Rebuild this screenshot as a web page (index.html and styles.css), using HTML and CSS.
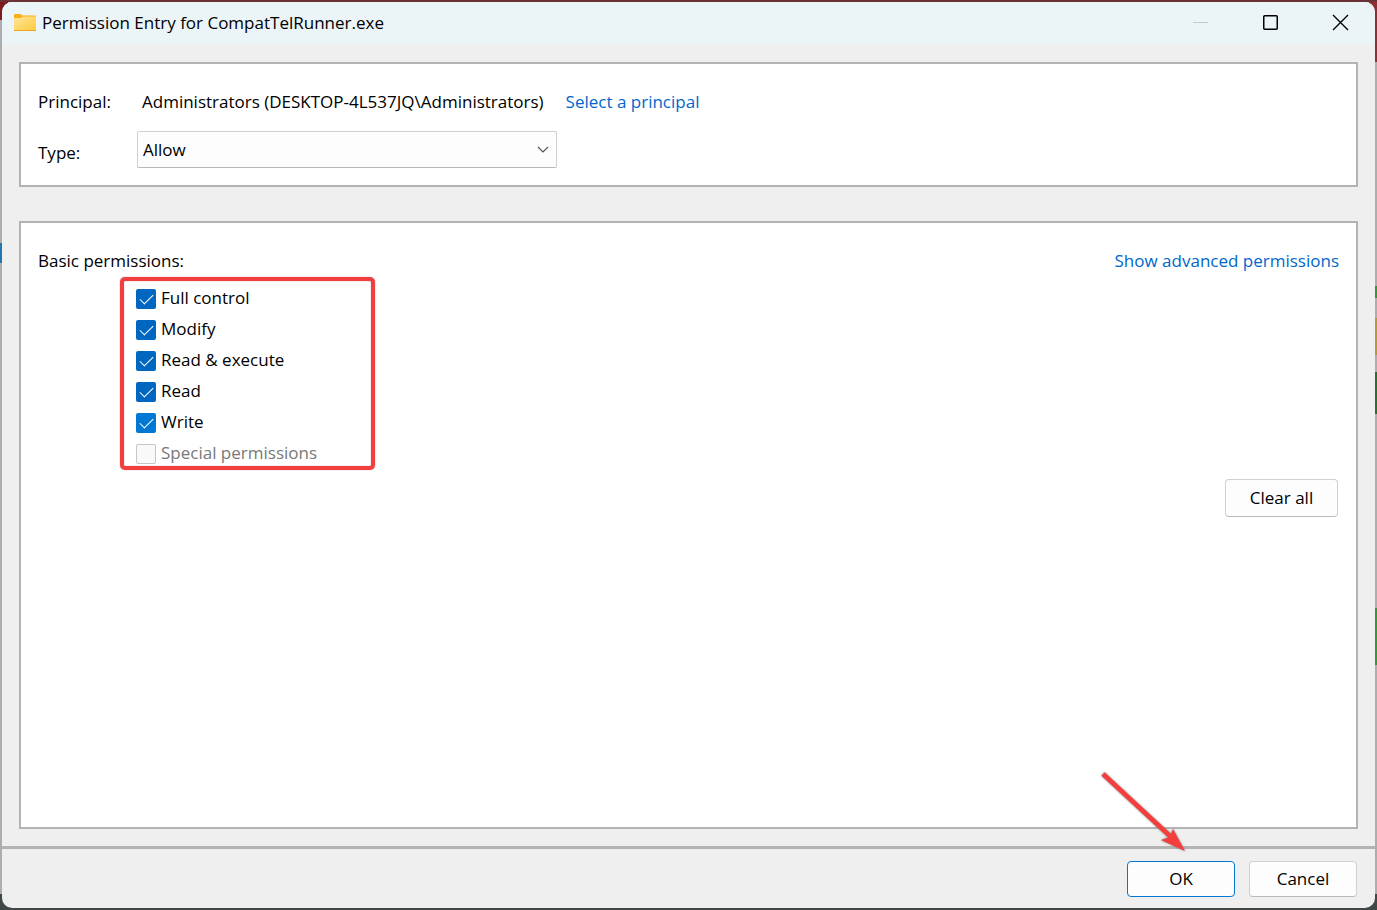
FILE: index.html
```
<!DOCTYPE html>
<html lang="en">
<head>
  <meta charset="UTF-8" />
  <meta name="viewport" content="width=device-width, initial-scale=1.0" />
  <title>Permission Entry for CompatTelRunner.exe</title>
  <link rel="stylesheet" href="styles.css">
</head>
<body>

  <div class="window">
    <header class="titlebar">
      <svg class="folder" width="22" height="18" viewBox="0 0 22 18" aria-hidden="true">
        <defs>
          <linearGradient id="folderFront" x1="0" y1="0" x2="1" y2="1">
            <stop offset="0" stop-color="#ffe69a" />
            <stop offset="1" stop-color="#ffc93c" />
          </linearGradient>
        </defs>
        <path d="M0 1Q0 0 1 0H6.5L8.5 1.5H21Q22 1.5 22 2.5V15H0Z" fill="#f8b016" />
        <path d="M0 4H6.5L9 2.5H22V16Q22 17 21 17H1Q0 17 0 16Z" fill="url(#folderFront)" />
        <path d="M0 16.5H22" stroke="#eda61c" />
      </svg>
      <h1>Permission Entry for CompatTelRunner.exe</h1>
      <div class="window-controls">
        <button type="button" aria-label="Minimize" disabled>
          <svg width="17" height="17" viewBox="0 0 17 17"><path d="M1 8.5H16" stroke="#c3c8ca" /></svg>
        </button>
        <button type="button" aria-label="Maximize">
          <svg width="17" height="17" viewBox="0 0 17 17"><rect x="1.75" y="1.75" width="13.5" height="13.5" rx="1" fill="none" stroke="#000" stroke-width="1.5" /></svg>
        </button>
        <button type="button" aria-label="Close">
          <svg width="17" height="17" viewBox="0 0 17 17"><path d="M1 1L16 16M16 1L1 16" stroke="#000" stroke-width="1.4" /></svg>
        </button>
      </div>
    </header>

    <main class="content">
      <section class="panel principal-panel">
        <div class="field">
          <span class="field-label">Principal:</span>
          <span class="principal-name">Administrators (DESKTOP-4L537JQ\Administrators)</span>
          <a href="#">Select a principal</a>
        </div>
        <div class="field">
          <label class="field-label" for="type">Type:</label>
          <div class="select-wrap">
            <select id="type">
              <option selected>Allow</option>
              <option>Deny</option>
            </select>
            <svg class="chevron" width="12" height="8" viewBox="0 0 12 8" aria-hidden="true"><path d="M1 1L6 6L11 1" fill="none" stroke="#555" stroke-width="1.2" /></svg>
          </div>
        </div>
      </section>

      <section class="panel permissions-panel">
        <div class="panel-head">
          <h2 id="basic">Basic permissions:</h2>
          <a href="#">Show advanced permissions</a>
        </div>
        <div class="permissions" role="group" aria-labelledby="basic">
          <label><input type="checkbox" checked>Full control</label>
          <label><input type="checkbox" checked>Modify</label>
          <label><input type="checkbox" checked>Read &amp; execute</label>
          <label><input type="checkbox" checked>Read</label>
          <label><input type="checkbox" class="active" checked>Write</label>
          <label class="disabled"><input type="checkbox" disabled>Special permissions</label>
          <div class="highlight"></div>
        </div>
        <button type="button" class="btn clear-btn">Clear all</button>
      </section>
    </main>

    <footer class="actions">
      <button type="button" class="btn primary">OK</button>
      <button type="button" class="btn">Cancel</button>
      <svg class="arrow" width="86" height="82" viewBox="0 0 86 82" aria-hidden="true">
        <path d="M3 3L71 66" stroke="#f43e3d" stroke-width="4.5" />
        <path d="M85 80L73 58L70 66L61 69Z" fill="#f43e3d" />
      </svg>
    </footer>
  </div>

</body>
</html>
```
FILE: styles.css
```
* {
  box-sizing: border-box;
}

body {
  margin: 0;
  padding: 2px;
  height: 100vh;
  font-family: 'Open Sans', 'Noto Sans', sans-serif;
  font-size: 17px;
  line-height: 24px;
  color: #000;
  /* slivers of the desktop around the window */
  background:
    linear-gradient(#6b3236, #6b3236) top / 100% 2px no-repeat,
    linear-gradient(#3f4747, #3f4747) bottom / 100% 16px no-repeat,
    linear-gradient(#2475b0, #2475b0) 0 243px / 2px 20px no-repeat,
    linear-gradient(#7c1a1d, #7c1a1d) left top / 8px 20px no-repeat,
    linear-gradient(#8b3033, #8b3033) right top / 8px 62px no-repeat,
    linear-gradient(#2e9a37, #2e9a37) right 286px / 2px 12px no-repeat,
    linear-gradient(#b39b30, #b39b30) right 318px / 2px 37px no-repeat,
    linear-gradient(#26722c, #26722c) right 372px / 2px 42px no-repeat,
    linear-gradient(#2e9a37, #2e9a37) right 608px / 2px 57px no-repeat,
    #adadad;
}

button, select, input {
  font: inherit;
  color: inherit;
}

a {
  color: #0066cc;
  text-decoration: none;
}

.window {
  height: 100%;
  display: flex;
  flex-direction: column;
  background: #efefef;
  border-radius: 10px;
  overflow: hidden;
}

.titlebar {
  display: flex;
  align-items: center;
  height: 43px;
  flex-shrink: 0;
  padding: 0 0 2px 12px;
  gap: 6px;
  background: #ebf4f7;
}

.titlebar h1 {
  margin: 0;
  font-size: 17px;
  font-weight: 400;
}

.window-controls {
  display: flex;
  align-self: stretch;
  margin-left: auto;
}

.window-controls button {
  display: flex;
  align-items: center;
  justify-content: center;
  width: 70px;
  padding: 0;
  border: none;
  background: none;
}

.content {
  flex: 1;
  display: flex;
  flex-direction: column;
  gap: 34px;
  padding: 17px;
}

.panel {
  background: #fff;
  border: 2px solid #b3b3b3;
}

.principal-panel {
  display: flex;
  flex-direction: column;
  gap: 17px;
  padding: 26px 17px 17px;
}

.field {
  display: flex;
  align-items: center;
}

.field-label {
  width: 99px;
}

label.field-label {
  padding-top: 6px;
}

.principal-name {
  margin: 0 22px 0 5px;
}

.select-wrap {
  position: relative;
  width: 420px;
}

.select-wrap select {
  display: block;
  appearance: none;
  width: 100%;
  height: 37px;
  padding: 0 32px 0 5px;
  border: 1px solid #cfcfcf;
  border-bottom-color: #b8b8b8;
  border-radius: 2px;
  background: #fdfdfd;
}

.chevron {
  position: absolute;
  top: 15px;
  right: 8px;
  pointer-events: none;
}

.permissions-panel {
  flex: 1;
  display: flex;
  flex-direction: column;
  padding: 26px 17px;
}

.panel-head {
  display: flex;
  justify-content: space-between;
}

.panel-head h2 {
  margin: 0;
  font-size: 17px;
  font-weight: 400;
}

.permissions {
  position: relative;
  display: flex;
  flex-direction: column;
  align-items: flex-start;
  margin: 9px 0 11px 98px;
}

.permissions label {
  display: flex;
  align-items: center;
  gap: 5px;
  height: 31px;
}

.permissions input {
  appearance: none;
  display: grid;
  place-items: center;
  width: 20px;
  height: 20px;
  margin: 2px 0 0;
  border-radius: 2px;
  background: #0067c0;
}

.permissions input.active {
  background: #0078d4;
}

.permissions input:checked::before {
  content: "";
  width: 12px;
  height: 6px;
  margin-bottom: 3px;
  border: solid #fff;
  border-width: 0 0 1px 1px;
  transform: rotate(-45deg);
}

.permissions input:disabled {
  background: #f9f9f9;
  border: 1px solid #c5c5c5;
}

.permissions .disabled {
  color: #787878;
}

/* red frame around the permission list */
.highlight {
  position: absolute;
  top: -5px;
  left: -16px;
  width: 255px;
  height: 193px;
  border: 4px solid #f43e3d;
  border-radius: 5px;
  box-shadow: 0 0 1px #555, inset 0 0 1px #555;
  pointer-events: none;
}

.btn {
  height: 36px;
  width: 108px;
  padding: 0;
  border: 1px solid #d0d0d0;
  border-bottom-color: #bababa;
  border-radius: 4px;
  background: #fdfdfd;
}

.btn.primary {
  border-color: #0078d4;
}

.clear-btn {
  align-self: flex-end;
  width: 113px;
  height: 38px;
  margin-right: 1px;
}

.actions {
  position: relative;
  display: flex;
  justify-content: flex-end;
  gap: 14px;
  padding: 12px 18px 11px;
  border-top: 3px solid #b3b3b3;
}

/* arrow pointing at OK */
.arrow {
  position: absolute;
  top: -78px;
  right: 189px;
  filter: drop-shadow(0 0 1px #777);
  pointer-events: none;
}
```
